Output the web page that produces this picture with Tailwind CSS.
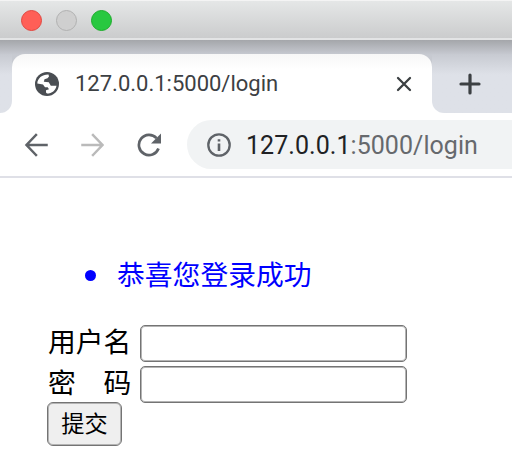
<!DOCTYPE html>
<html lang="zh">
<head>
<meta charset="utf-8">
<title>127.0.0.1:5000/login</title>
<script src="https://cdn.jsdelivr.net/npm/@tailwindcss/browser@4"></script>
</head>
<body class="w-[512px] h-[464px] overflow-hidden bg-white font-['Roboto','Noto_Sans_CJK_SC',sans-serif]">
<div class="h-10 bg-linear-to-b from-[#e5e7e7] to-[#cbcccd] border-t border-t-[#f4f4f4] border-b-2 border-b-[#e3e4e5] flex items-start pl-[21px] pt-[9px] gap-[14px]">
  <span class="size-[21px] rounded-full bg-[#ff5f57] border border-[#e2463f]"></span>
  <span class="size-[21px] rounded-full bg-[#cfcfcf] border border-[#b1b1b1]"></span>
  <span class="size-[21px] rounded-full bg-[#28c840] border border-[#1dad2b]"></span>
</div>
<div class="h-[73px] flex pt-[14px] bg-linear-to-b from-[#a4a6aa] to-[#c7cad1] to-20%">
  <div class="w-3 bg-white"><div class="h-full rounded-br-[12px] bg-linear-to-b from-[#c7cad1] to-[#dee1e8] to-35%"></div></div>
  <div class="w-[420px] rounded-t-[13px] bg-linear-to-b from-[#f7f7f7] to-white to-25% flex items-center pl-[23px]">
    <svg class="size-6 shrink-0" viewBox="0 0 24 24"><circle cx="12" cy="12" r="12" fill="#4a4e53"/><path d="M2.300 11.500C2.500 6.500 7 2.500 13.500 2.600L14 4.500 12.500 6.200 9.500 7.200 8.800 9.800 13.800 10.300 15.800 13.800H21.500C20.600 18.500 17 21.500 12 21.600L11 20.500V18.300L14 17.200 12.700 15.200H10L8 12.500z" fill="#fff"/></svg>
    <span class="ml-4 text-[22px] leading-6 text-[#3c4043] w-[321px] whitespace-nowrap">127.0.0.1:5000/login</span>
    <svg class="size-4 shrink-0" viewBox="0 0 16 16" stroke="#3c4043" stroke-width="2.300" stroke-linecap="round"><path d="M2 2l12 12M14 2L2 14"/></svg>
  </div>
  <div class="flex-1 bg-white"><div class="h-full rounded-bl-[12px] bg-linear-to-b from-[#c7cad1] to-[#dee1e8] to-35% flex items-center pl-[27px]">
    <svg class="size-[22px]" viewBox="0 0 22 22" stroke="#3c4043" stroke-width="3.200" stroke-linecap="round"><path d="M11 2v18M2 11h18"/></svg>
  </div></div>
</div>
<div class="h-[65px] border-b-2 border-[#dfe0e7] flex items-center">
  <svg class="ml-6 size-6" viewBox="0 0 24 24" fill="none" stroke="#5f6368" stroke-width="2.500" stroke-linecap="square"><path d="M12 2L2.500 12 12 22M3 12h19.500"/></svg>
  <svg class="ml-8 size-6" viewBox="0 0 24 24" fill="none" stroke="#bababa" stroke-width="2.500" stroke-linecap="square"><path d="M13 2l9.500 10L13 22M22 12H2.500"/></svg>
  <svg class="ml-[33px] size-6" viewBox="0 0 24 24"><path d="M21.500 15.500A10.100 10.100 0 1 1 19.500 5.200" fill="none" stroke="#5f6368" stroke-width="2.700"/><path d="M24 .5v10H14z" fill="#5f6368"/></svg>
  <div class="ml-[26px] flex-1 h-[49px] rounded-l-full bg-[#f1f3f4] flex items-center pl-5">
    <svg class="size-6 shrink-0" viewBox="0 0 24 24"><circle cx="12" cy="12" r="10.700" fill="none" stroke="#5f6368" stroke-width="2.300"/><path d="M12 10.500v7.500M12 6.200v2.300" stroke="#5f6368" stroke-width="2.600"/></svg>
    <span class="ml-[15px] pt-0.5 text-[25px] leading-7 tracking-[0.05px] text-[#202124] whitespace-nowrap">127.0.0.1<span class="text-[#66696d]">:5000/login</span></span>
  </div>
</div>
<main class="pl-[47px] text-[27.800px] leading-10 text-black">
  <ul class="pt-[77px] pl-[38px] text-[#0000ff]">
    <li class="flex items-center h-10"><span class="size-[11px] rounded-full bg-[#0000ff]"></span><span class="ml-[21px] pt-0.5">恭喜您登录成功</span></li>
  </ul>
  <form class="pt-[30px]">
    <div class="flex h-[37px] items-center"><label class="w-[93px] pl-px pb-px whitespace-nowrap">用户名</label><input class="w-[267px] h-[37px] border border-[#747474] inset-shadow-[0_0_0_1px_#b4b4b4] rounded-[5px] bg-white"></div>
    <div class="mt-[3.500px] flex h-[37px] items-center"><label class="w-[93px] pl-px pb-px whitespace-nowrap">密　码</label><input type="password" class="w-[267px] h-[37px] border border-[#747474] inset-shadow-[0_0_0_1px_#b4b4b4] rounded-[5px] bg-white"></div>
    <button type="button" class="-mt-[0.500px] block w-[75px] h-[44px] border border-[#747474] inset-shadow-[0_0_0_1px_#b4b4b4] rounded-[6px] bg-[#efefef] text-[23.200px] leading-9 whitespace-nowrap">提交</button>
  </form>
</main>
</body>
</html>
